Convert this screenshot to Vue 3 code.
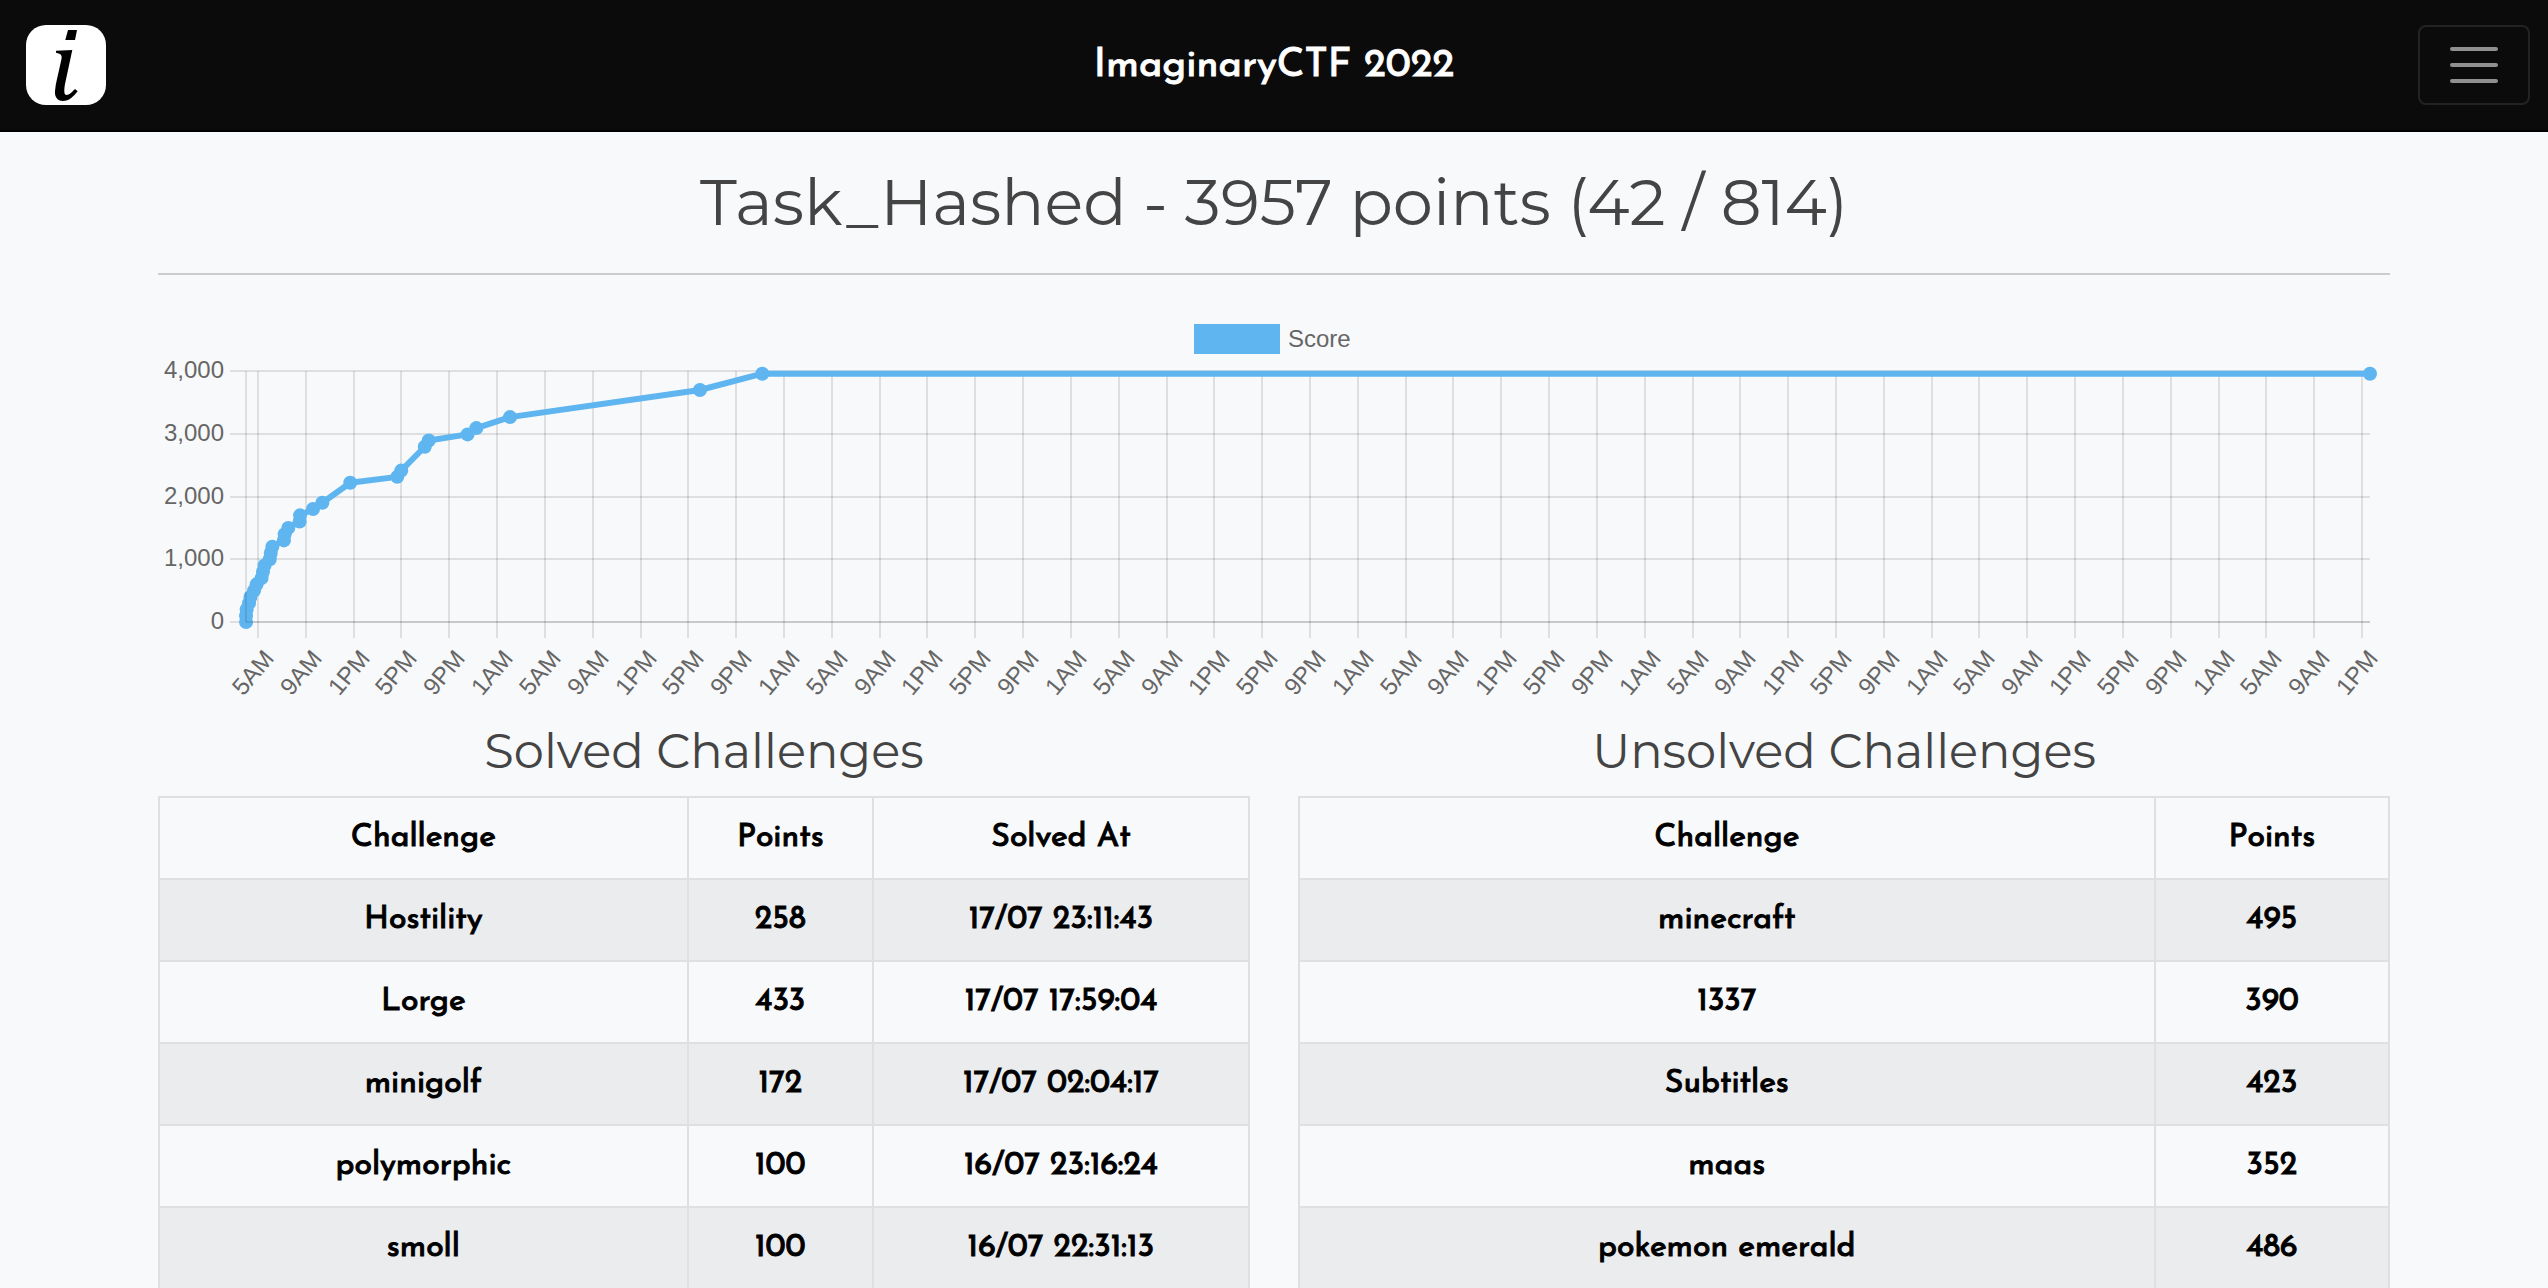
<script setup>
const solved = [
  { name: 'Hostility', points: 258, at: '17/07 23:11:43' },
  { name: 'Lorge', points: 433, at: '17/07 17:59:04' },
  { name: 'minigolf', points: 172, at: '17/07 02:04:17' },
  { name: 'polymorphic', points: 100, at: '16/07 23:16:24' },
  { name: 'smoll', points: 100, at: '16/07 22:31:13' }
]

const unsolved = [
  { name: 'minecraft', points: 495 },
  { name: '1337', points: 390 },
  { name: 'Subtitles', points: 423 },
  { name: 'maas', points: 352 },
  { name: 'pokemon emerald', points: 486 }
]

// Plot area in viewBox units
const plot = { left: 88, right: 2212, top: 59, bottom: 310 }
const firstTick = 100
const tickStep = 2104 / 44

const hours = ['5AM', '9AM', '1PM', '5PM', '9PM', '1AM']
const xTicks = Array.from({ length: 45 }, (_, i) => ({
  x: Math.round(firstTick + i * tickStep),
  label: hours[i % 6]
}))

const yOf = (score) => plot.bottom - (score * (plot.bottom - plot.top)) / 4000
const xOf = (minutes) => Math.min(plot.right, firstTick + (minutes * tickStep) / 240)

const yTicks = [4000, 3000, 2000, 1000, 0].map((v) => ({
  y: Math.round(yOf(v)),
  label: v.toLocaleString('en-US')
}))

// [minutes after the first 5AM tick, score]
const history = [
  [-60, 0], [-60, 100], [-57, 200], [-45, 300], [-38, 400], [-20, 500],
  [-7, 600], [18, 700], [25, 800], [33, 900], [59, 1000], [64, 1100],
  [72, 1200], [130, 1300], [134, 1400], [152, 1500], [209, 1600],
  [211, 1700], [276, 1800], [323, 1900], [463, 2220], [699, 2313],
  [719, 2413], [837, 2793], [857, 2893], [1052, 2990], [1096, 3090],
  [1265, 3265], [2218, 3697], [2531, 3957], [10620, 3957]
]
const points = history.map(([m, s]) => ({ x: xOf(m), y: yOf(s) }))
const line = points.map((p) => `${p.x},${p.y}`).join(' ')
</script>

<template>
  <header class="navbar">
    <a class="logo" href="#" aria-label="ImaginaryCTF home">
      <svg viewBox="0 0 80 80">
        <rect width="80" height="80" rx="20" fill="#fff" />
        <path d="M42 5H51L49 15H39.3Z" />
        <path d="M30 25.7L46.3 25L38.8 60C38 66 38 70 40.5 70C43 70 46 67 49 64L51.7 66.3C47 72 43 76 37 76C31 76 28.5 71.5 29 66C29.3 62 30 58 31 54L35.5 34C36 30 35.5 29 30 27.7Z" />
      </svg>
    </a>
    <a class="brand" href="#">ImaginaryCTF 2022</a>
    <button class="toggler" type="button" aria-label="Toggle navigation">
      <svg viewBox="0 0 30 30">
        <path d="M4 7h22M4 15h22M4 23h22" fill="none" stroke="currentColor" stroke-width="2" stroke-linecap="round" />
      </svg>
    </button>
  </header>

  <main class="container">
    <h1>Task_Hashed - 3957 points (42 / 814)</h1>
    <hr />

    <svg class="chart" viewBox="0 0 2232 390" role="img" aria-label="Score over time">
      <rect x="1036" y="12" width="86" height="30" class="fill" />
      <text x="1130" y="35">Score</text>

      <g class="grid">
        <path v-for="t in yTicks" :key="t.y" :d="`M72 ${t.y}H${plot.right}`" />
        <path v-for="t in xTicks" :key="t.x" :d="`M${t.x} ${plot.top}V326`" />
      </g>

      <polyline :points="line" class="line" />
      <circle v-for="(p, i) in points" :key="i" :cx="p.x" :cy="p.y" r="7" class="fill" />

      <g class="grid">
        <path :d="`M${plot.left} ${plot.top}V${plot.bottom}`" />
        <path :d="`M${plot.left} ${plot.bottom}H${plot.right}`" />
      </g>

      <text v-for="t in yTicks" :key="'y' + t.y" x="66" :y="t.y + 7" text-anchor="end">{{ t.label }}</text>
      <text
        v-for="t in xTicks"
        :key="'x' + t.x"
        :transform="`translate(${t.x + 17} 347) rotate(-50)`"
        text-anchor="end"
      >{{ t.label }}</text>
    </svg>

    <div class="columns">
      <section>
        <h2 id="solved-title">Solved Challenges</h2>
        <table aria-labelledby="solved-title">
          <colgroup><col class="c-name" /><col class="c-points" /><col /></colgroup>
          <thead>
            <tr><th>Challenge</th><th>Points</th><th>Solved At</th></tr>
          </thead>
          <tbody>
            <tr v-for="c in solved" :key="c.name">
              <td>{{ c.name }}</td><td>{{ c.points }}</td><td>{{ c.at }}</td>
            </tr>
          </tbody>
        </table>
      </section>
      <section>
        <h2 id="unsolved-title">Unsolved Challenges</h2>
        <table aria-labelledby="unsolved-title">
          <colgroup><col class="c-wide" /><col /></colgroup>
          <thead>
            <tr><th>Challenge</th><th>Points</th></tr>
          </thead>
          <tbody>
            <tr v-for="c in unsolved" :key="c.name">
              <td>{{ c.name }}</td><td>{{ c.points }}</td>
            </tr>
          </tbody>
        </table>
      </section>
    </div>
  </main>
</template>

<style>
body {
  margin: 0;
  background: #f8f9fb;
}
</style>

<style scoped>
.navbar {
  display: grid;
  grid-template-columns: 1fr auto 1fr;
  align-items: center;
  box-sizing: border-box;
  height: 132px;
  padding: 0 18px;
  background: #0b0b0b;
  border-bottom: 2px solid #000;
}
.logo {
  width: 80px;
  height: 80px;
  margin-left: 8px;
}
.logo svg,
.toggler svg {
  display: block;
}
.brand {
  padding-top: 2px;
  color: #fff;
  font: 40px/48px "Josefin Sans", Lato, sans-serif;
  -webkit-text-stroke: 1px currentColor;
  text-decoration: none;
}
.toggler {
  justify-self: end;
  box-sizing: border-box;
  width: 112px;
  height: 80px;
  padding: 8px 24px;
  background: transparent;
  border: 2px solid rgba(255, 255, 255, 0.1);
  border-radius: 8px;
  color: rgba(255, 255, 255, 0.55);
}
.toggler svg {
  width: 60px;
  height: 60px;
}
.container {
  box-sizing: border-box;
  max-width: 2280px;
  margin: 0 auto;
  padding: 32px 24px 0;
}
h1,
h2 {
  margin: 0;
  color: #444;
  font-family: Montserrat, Inter, sans-serif;
  font-weight: 400;
  text-align: center;
}
h1 {
  font-size: 64px;
  line-height: 77px;
}
hr {
  height: 2px;
  margin: 32px 0 37px;
  border: 0;
  background: #cbccce;
}
.chart {
  display: block;
  width: 100%;
  font: 24px "Helvetica Neue", "Liberation Sans", Arial, sans-serif;
  fill: #666;
}
.grid {
  stroke: rgba(0, 0, 0, 0.1);
  stroke-width: 2;
}
.line {
  fill: none;
  stroke: #5eb5ef;
  stroke-width: 6;
  stroke-linejoin: round;
}
.fill {
  fill: #5eb5ef;
}
.columns {
  display: grid;
  grid-template-columns: 1fr 1fr;
  gap: 48px;
  padding-top: 20px;
}
h2 {
  font-size: 48px;
  line-height: 58px;
  margin-bottom: 16px;
}
table {
  width: 100%;
  table-layout: fixed;
  border-collapse: collapse;
  color: #000;
  font: 32px/48px "Josefin Sans", Lato, sans-serif;
  -webkit-text-stroke: 1px currentColor;
}
th,
td {
  height: 48px;
  padding: 16px;
  border: 2px solid #dee0e2;
  font-weight: 400;
  text-align: center;
}
tbody tr:nth-child(odd) {
  background: #ebecee;
}
.c-name {
  width: 48.5%;
}
.c-points {
  width: 17%;
}
.c-wide {
  width: 78.5%;
}
</style>
